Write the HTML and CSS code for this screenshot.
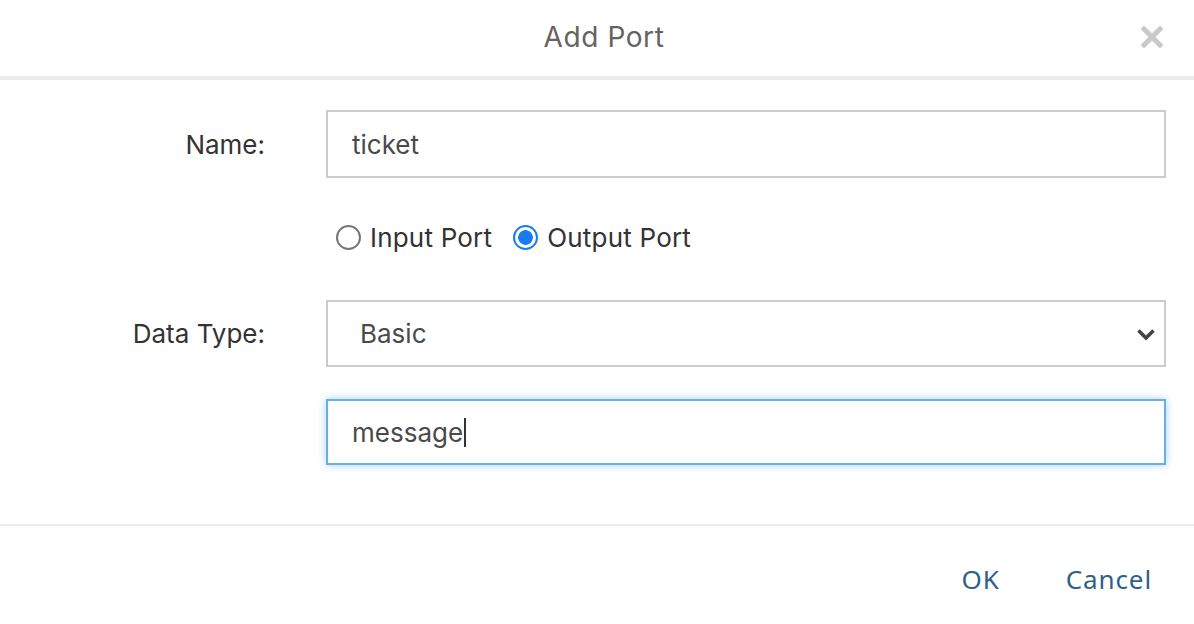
FILE: index.html
```html
<!DOCTYPE html>
<html>
<head>
<meta charset="utf-8">
<link rel="stylesheet" href="styles.css">
</head>
<body>
<div class="dialog">
  <header class="header">
    <h1 class="title">Add Port</h1>
    <span class="close">
      <svg width="22" height="22" viewBox="0 0 22 22"><path d="M3 3 L19 19 M19 3 L3 19" stroke="#c9c9c9" stroke-width="5" stroke-linecap="square" fill="none"/></svg>
    </span>
  </header>
  <main class="form">
    <div class="row row-name">
      <label class="label">Name:</label>
      <div class="field">ticket</div>
    </div>
    <div class="row row-radio">
      <span></span>
      <div class="radios">
        <span class="radio"><span class="circle"></span>Input Port</span>
        <span class="radio"><span class="circle checked"></span>Output Port</span>
      </div>
    </div>
    <div class="row row-type">
      <label class="label">Data Type:</label>
      <div class="field select"><span class="select-text">Basic</span>
        <svg class="chev" width="20" height="13" viewBox="0 0 20 13"><path d="M2.5 2.5 L10 10 L17.5 2.5" stroke="#444" stroke-width="3.6" fill="none"/></svg>
      </div>
    </div>
    <div class="row row-msg">
      <span></span>
      <div class="field focus">message<span class="caret"></span></div>
    </div>
  </main>
  <footer class="footer">
    <button class="btn">OK</button>
    <button class="btn">Cancel</button>
  </footer>
</div>
</body>
</html>
```
FILE: styles.css
```css
html, body {
  margin: 0;
  padding: 0;
  background: #fff;
}
.dialog {
  width: 1194px;
  height: 624px;
  font-family: Inter, "Liberation Sans", sans-serif;
}
.header {
  position: relative;
  height: 76px;
  border-bottom: 4px solid #ebebeb;
  display: flex;
  align-items: center;
  justify-content: center;
  padding-left: 14px;
}
.title {
  margin: 0;
  font-family: Inter, "Liberation Sans", sans-serif;
  font-weight: normal;
  font-size: 28px;
  letter-spacing: 0.6px;
  color: #636363;
  transform: translateY(-1px);
}
.close {
  position: absolute;
  right: 31px;
  top: 26px;
  width: 22px;
  height: 22px;
  display: block;
}
.close svg { display: block; }
.form {
  padding-top: 30px;
  height: 446px;
  box-sizing: border-box;
  border-bottom: 2px solid #ececec;
}
.row {
  display: grid;
  grid-template-columns: 265px 840px;
  column-gap: 61px;
  align-items: center;
}
.label {
  text-align: right;
  font-size: 26px;
  color: #333;
}
.field {
  height: 68px;
  box-sizing: border-box;
  border: 2px solid #cccccc;
  padding-left: 24px;
  display: flex;
  align-items: center;
  font-size: 26px;
  color: #4a4a4a;
  background: #fff;
}
.row-radio {
  height: 30px;
  margin-top: 44px;
  margin-bottom: 48px;
}
.radios {
  display: flex;
  align-items: center;
  padding-left: 10px;
  font-size: 26px;
  letter-spacing: 0.2px;
  color: #333;
}
.radio {
  display: inline-flex;
  align-items: center;
  margin-right: 21px;
}
.circle {
  width: 25px;
  height: 25px;
  box-sizing: border-box;
  border-radius: 50%;
  border: 2px solid #767676;
  margin-right: 9px;
  background: #fff;
}
.circle.checked {
  border: 2.5px solid #1a7cf5;
  background: radial-gradient(circle, #1a7cf5 0 7px, #fff 7.6px);
}
.row-type .field {
  height: 67px;
}
.select {
  position: relative;
  padding-left: 32px;
}
.chev {
  position: absolute;
  right: 8px;
  top: 26px;
}
.row-msg {
  margin-top: 32px;
}
.row-msg .field {
  height: 66px;
}
.focus {
  border-color: #66afe9;
  box-shadow: 0 0 8px rgba(102, 175, 233, 0.55);
}
.caret {
  display: inline-block;
  width: 2px;
  height: 29px;
  background: #333;
  margin-left: 1px;
}
.footer {
  display: flex;
  justify-content: flex-end;
  align-items: center;
  padding-top: 35px;
  padding-right: 42px;
  gap: 66px;
}
.btn {
  border: none;
  background: none;
  padding: 0;
  font-family: "Noto Sans", sans-serif;
  font-size: 26px;
  letter-spacing: 0.9px;
  color: #2f5f8c;
  cursor: pointer;
}
```
